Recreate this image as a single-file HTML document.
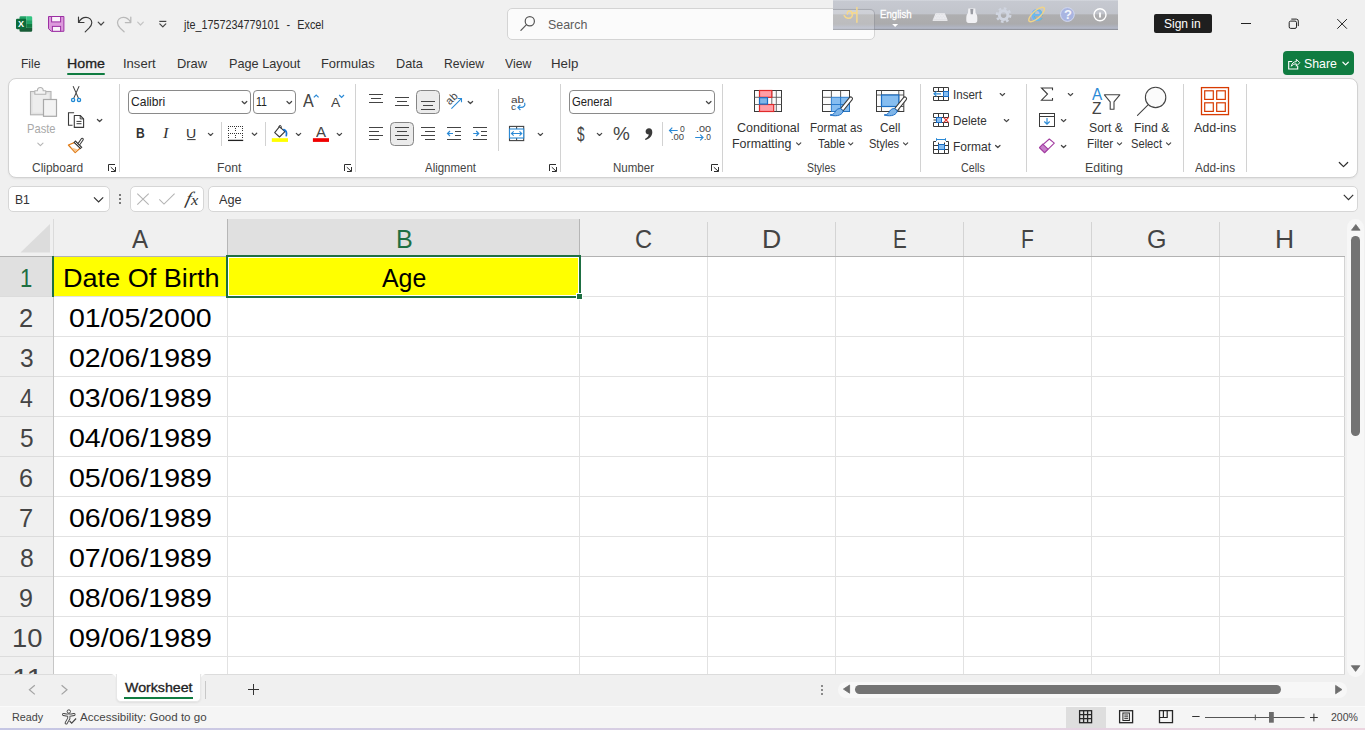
<!DOCTYPE html>
<html lang="en"><head><meta charset="utf-8"><title>jte_1757234779101 - Excel</title>
<style>
html,body{margin:0;padding:0}
body{width:1365px;height:730px;overflow:hidden;position:relative;background:#f0f0f0;font-family:"Liberation Sans",sans-serif;color:#333}
div,span.t,svg.ov{position:absolute;box-sizing:border-box}
section,header,nav,main,footer{display:block}
span.t{white-space:pre;transform-origin:0 50%}
svg.ov{left:0;top:0;width:1365px;height:730px;overflow:visible;pointer-events:none}
</style></head>
<body>
<header class="titlebar"><div class="search" style="left:507px;top:8px;width:367.5px;height:31.5px;background:#fbfbfb;border:1px solid #d4d4d4;border-radius:5px"></div><span class="t" style="left:548.44px;top:16.86px;font-size:13.4px;line-height:16px;color:#5c5c5c;transform:scaleX(0.9278);">Search</span><span class="t" style="left:183.56px;top:18.33px;font-size:12.6px;line-height:15px;color:#2b2b2b;transform:scaleX(0.8566);word-spacing:.7px;">jte_1757234779101  -  Excel</span><div class="signin" style="left:1154px;top:14px;width:58px;height:18.8px;background:#1f1f1f;border-radius:2px"></div><span class="t" style="left:1164.25px;top:15.83px;font-size:13.2px;line-height:16px;color:#fff;transform:scaleX(0.9107);">Sign in</span><svg class="ov" viewBox="0 0 1365 730"><g>
<path d="M20.800 16.200h5.600v3.900h-6.900v-2.600a1.300 1.300 0 0 1 1.300-1.300z" fill="#21a366"/>
<path d="M26.400 16.200h4.500a1.300 1.300 0 0 1 1.300 1.300v2.600h-5.800z" fill="#33c481"/>
<rect x="19.500" y="20.100" width="6.900" height="3.900" fill="#107c41"/>
<rect x="26.400" y="20.100" width="5.800" height="3.900" fill="#21a366"/>
<rect x="19.500" y="24" width="6.900" height="3.900" fill="#185c37"/>
<rect x="26.400" y="24" width="5.800" height="3.900" fill="#107c41"/>
<path d="M19.500 27.900h12.700v2.500a1.300 1.300 0 0 1 -1.300 1.300h-10.100a1.300 1.300 0 0 1 -1.300-1.300z" fill="#185c37"/>
<rect x="16" y="18.700" width="10.200" height="10.500" rx="1.100" fill="#0c6b3a"/>
<text x="18.100" y="27.200" font-family="Liberation Sans, sans-serif" font-weight="700" font-size="9.200" fill="#fff" textLength="6" lengthAdjust="spacingAndGlyphs">X</text>
</g><g>
<path d="M48.500 16.500h15.400v14.800h-12.600l-2.800-2.600z" fill="#dc9adc" stroke="#9c2fa3" stroke-width="1"/>
<rect x="51.600" y="16.500" width="9" height="5.400" fill="#fbf3fb" stroke="#9c2fa3" stroke-width="1"/>
<rect x="52.400" y="26.400" width="8.200" height="4.900" fill="#fbf3fb" stroke="#9c2fa3" stroke-width="1"/>
</g><path d="M78.5 17v5.5h5.5M78.7 22.3c1.5-3 4.3-5 7.3-5c3.3 0 5.8 2.500 5.8 5.500c0 2-1 3.600-2.800 5.400l-3.800 3.600" fill="none" stroke="#3a3a3a" stroke-width="1.15" stroke-linecap="round" stroke-linejoin="round"/><path d="M98.2 22.200000000000003 l2.8 2.8 l2.8 -2.8" fill="none" stroke="#444" stroke-width="1.2" stroke-linecap="round" stroke-linejoin="round"/><path d="M130.800 17v5.500h-5.500M130.600 22.300c-1.500-3-4.300-5-7.300-5c-3.300 0-5.800 2.500-5.800 5.500c0 2 1 3.600 2.800 5.400l3.800 3.600" fill="none" stroke="#b9b9b9" stroke-width="1.25" stroke-linecap="round" stroke-linejoin="round"/><path d="M137.7 22.200000000000003 l2.8 2.8 l2.8 -2.8" fill="none" stroke="#c4c4c4" stroke-width="1.2" stroke-linecap="round" stroke-linejoin="round"/><path d="M159.300 21.400h7" stroke="#444" stroke-width="1.2" fill="none"/><path d="M159.8 23.9 l3.0 3 l3.0 -3" fill="none" stroke="#444" stroke-width="1.2" stroke-linecap="round" stroke-linejoin="round"/><circle cx="529.800" cy="21.200" r="4.600" fill="none" stroke="#555" stroke-width="1.2"/><path d="M526.500 24.600l-5.600 5.800" stroke="#555" stroke-width="1.2" stroke-linecap="round"/><path d="M1241 23.500h10" stroke="#222" stroke-width="1"/><rect x="1289.200" y="21.100" width="7.300" height="7.300" rx="1.500" fill="none" stroke="#222" stroke-width="1"/><path d="M1291.300 19.100h5a2 2 0 0 1 2 2v5" fill="none" stroke="#222" stroke-width="1"/><path d="M1337.300 19.100l9.600 9.600M1346.900 19.100l-9.600 9.600" stroke="#222" stroke-width="1"/></svg></header><div class="imebar" style="left:833px;top:0;width:285px;height:30px;background:linear-gradient(#d4d7de 0,#c3c6ce 1.500px,#bec1c9 13.500px,#a9a9ab 15px,#a6a6a8 24px,#a9adb9 26.500px,#b0b5c5 28.400px,#858892 29px,#90939c 30px);opacity:.93"></div><div class="ime-through" style="left:833px;top:8.5px;width:41.5px;height:21px;background:rgba(255,255,255,.2);border-top:1px solid rgba(110,112,122,.4);border-right:1px solid rgba(110,112,122,.4);border-top-right-radius:5px"></div><span class="t" style="left:880.21px;top:7.93px;font-size:10.6px;line-height:13px;color:#fff;transform:scaleX(0.9099);-webkit-text-stroke:.3px #fff;">English</span><svg class="ov" viewBox="0 0 1365 730"><path d="M892.100 24h6l-3 3z" fill="#fff"/><path d="M844.200 15.500c1.200 3.200 5.800 3.800 7.600 1.200c1.500-2.200.5-5.400-2-5.600c-1.800-.1-2.900 1.300-2.400 2.900M851.300 13.400c1.600-.9 3.600-.9 5.400-.2M856.900 7.400v14.800" fill="none" stroke="#f6d98d" stroke-width="1.500" stroke-linecap="round"/><path d="M935.600 13.200h9.200l2.700 6.600h-14.700z" fill="#ececf0"/><path d="M936 14.500h8.500M935.200 16.200h10M934.400 17.900h11.600" stroke="#d2d3d9" stroke-width=".6" stroke-dasharray=".8 .8"/><path d="M932.700 20.300h14.800" stroke="#f6f6f8" stroke-width="1"/><path d="M968.300 8.500h7l.3 4.500c1.100 1.200 1.700 2.800 1.700 4.800v2.700c0 1.500-.9 2.500-2.300 2.500h-6.400c-1.400 0-2.300-1-2.300-2.500v-2.700c0-2 .6-3.600 1.700-4.800z" fill="#f1f1f4"/><path d="M970.300 9h3l-.4 5.200h-2.200z" fill="#9a9ca3"/><g fill="none" stroke="#d0d5e0"><circle cx="1003.600" cy="15.100" r="4.300" stroke-width="3"/><circle cx="1003.600" cy="15.100" r="6.700" stroke-width="2.300" stroke-dasharray="2.630 2.632"/></g><text x="1030.400" y="20.500" font-family="Liberation Sans, sans-serif" font-weight="700" font-size="22" fill="#6db7ee" textLength="12.600" lengthAdjust="spacingAndGlyphs">e</text><ellipse cx="1036.600" cy="14.500" rx="10" ry="3.700" transform="rotate(-42 1036.600 14.500)" fill="none" stroke="#f0d48a" stroke-width="1.400"/><circle cx="1067.400" cy="14.500" r="6.900" fill="#a9b5e1" stroke="#d3d9ef" stroke-width="1"/><text x="1063.900" y="19.300" font-family="Liberation Sans, sans-serif" font-weight="700" font-size="13" fill="#f3f5fb">?</text><circle cx="1100" cy="14.800" r="6" fill="none" stroke="#fff" stroke-width="1.400"/><path d="M1100 12.600v4.800" stroke="#fff" stroke-width="1.800"/></svg><nav class="tabs"><span class="t" style="left:20.72px;top:56.19px;font-size:13.6px;line-height:16px;color:#333;transform:scaleX(0.8818);">File</span><span class="t" style="left:66.53px;top:56.19px;font-size:13.6px;line-height:16px;color:#1f1f1f;transform:scaleX(1.0450);-webkit-text-stroke:.32px #1f1f1f;">Home</span><span class="t" style="left:123.30px;top:56.19px;font-size:13.6px;line-height:16px;color:#333;transform:scaleX(0.9588);">Insert</span><span class="t" style="left:176.74px;top:56.19px;font-size:13.6px;line-height:16px;color:#333;transform:scaleX(0.9461);">Draw</span><span class="t" style="left:228.66px;top:56.19px;font-size:13.6px;line-height:16px;color:#333;transform:scaleX(0.9344);">Page Layout</span><span class="t" style="left:321.44px;top:56.19px;font-size:13.6px;line-height:16px;color:#333;transform:scaleX(0.9482);">Formulas</span><span class="t" style="left:395.66px;top:56.19px;font-size:13.6px;line-height:16px;color:#333;transform:scaleX(0.9347);">Data</span><span class="t" style="left:443.90px;top:56.19px;font-size:13.6px;line-height:16px;color:#333;transform:scaleX(0.8966);">Review</span><span class="t" style="left:504.55px;top:56.19px;font-size:13.6px;line-height:16px;color:#333;transform:scaleX(0.9044);">View</span><span class="t" style="left:550.61px;top:56.19px;font-size:13.6px;line-height:16px;color:#333;transform:scaleX(0.9779);">Help</span><div class="tabline" style="left:67px;top:72.5px;width:37.5px;height:2.2px;background:#107c41;border-radius:1px"></div><div class="share" style="left:1283px;top:51px;width:70.8px;height:24px;background:#107c41;border-radius:4px"></div><span class="t" style="left:1303.84px;top:55.86px;font-size:13.4px;line-height:16px;color:#fff;transform:scaleX(0.9209);">Share</span><svg class="ov" viewBox="0 0 1365 730"><path d="M1292.200 61.500h-3.500v7.500h9v-3" fill="none" stroke="#fff" stroke-width="1.100"/><path d="M1291.300 66.300c.5-3 2.500-4.600 5-4.700v-2.400l3.500 3.500l-3.500 3.500v-2.300c-2-.1-3.700.6-5 2.400z" fill="none" stroke="#fff" stroke-width="1" stroke-linejoin="round"/><path d="M1342.8999999999999 62.25 l2.7 2.7 l2.7 -2.7" fill="none" stroke="#fff" stroke-width="1.2" stroke-linecap="round" stroke-linejoin="round"/></svg></nav><section class="ribbon"><div class="ribbon-bg" style="left:8px;top:78px;width:1349.5px;height:99.6px;background:#fff;border:1px solid #d2d2d2;border-radius:8px;box-shadow:0 1px 2px rgba(0,0,0,.06)"></div><div class="gsep" style="left:119px;top:83.5px;width:1px;height:88.5px;background:#d2d2d2"></div><div class="gsep" style="left:355px;top:83.5px;width:1px;height:88.5px;background:#d2d2d2"></div><div class="gsep" style="left:560px;top:83.5px;width:1px;height:88.5px;background:#d2d2d2"></div><div class="gsep" style="left:722px;top:83.5px;width:1px;height:88.5px;background:#d2d2d2"></div><div class="gsep" style="left:920px;top:83.5px;width:1px;height:88.5px;background:#d2d2d2"></div><div class="gsep" style="left:1026px;top:83.5px;width:1px;height:88.5px;background:#d2d2d2"></div><div class="gsep" style="left:1183px;top:83.5px;width:1px;height:88.5px;background:#d2d2d2"></div><div class="gsep" style="left:1246px;top:83.5px;width:1px;height:88.5px;background:#d2d2d2"></div><div class="sep" style="left:221px;top:122px;width:1px;height:24px;background:#d2d2d2"></div><div class="sep" style="left:265px;top:122px;width:1px;height:24px;background:#d2d2d2"></div><div class="sep" style="left:662px;top:122px;width:1px;height:24px;background:#d2d2d2"></div><div class="sep" style="left:498px;top:89px;width:1px;height:62px;background:#d2d2d2"></div><span class="t" style="left:31.89px;top:161.17px;font-size:12.2px;line-height:15px;color:#444;transform:scaleX(0.9810);">Clipboard</span><span class="t" style="left:216.60px;top:161.17px;font-size:12.2px;line-height:15px;color:#444;transform:scaleX(0.9957);">Font</span><span class="t" style="left:424.58px;top:161.17px;font-size:12.2px;line-height:15px;color:#444;transform:scaleX(0.9410);">Alignment</span><span class="t" style="left:612.75px;top:161.17px;font-size:12.2px;line-height:15px;color:#444;transform:scaleX(0.9465);">Number</span><span class="t" style="left:807.13px;top:161.17px;font-size:12.2px;line-height:15px;color:#444;transform:scaleX(0.8569);">Styles</span><span class="t" style="left:961.16px;top:161.17px;font-size:12.2px;line-height:15px;color:#444;transform:scaleX(0.8796);">Cells</span><span class="t" style="left:1085.48px;top:161.17px;font-size:12.2px;line-height:15px;color:#444;transform:scaleX(1.0147);">Editing</span><span class="t" style="left:1195.08px;top:161.17px;font-size:12.2px;line-height:15px;color:#444;transform:scaleX(0.9691);">Add-ins</span><div class="combo" style="left:128px;top:90px;width:122.5px;height:24px;background:#fff;border:1px solid #8a8a8a;border-radius:4px"></div><div class="combo" style="left:253px;top:90px;width:43px;height:24px;background:#fff;border:1px solid #8a8a8a;border-radius:4px"></div><div class="combo" style="left:569px;top:90px;width:146px;height:24px;background:#fff;border:1px solid #8a8a8a;border-radius:4px"></div><span class="t" style="left:131.29px;top:95.17px;font-size:12.2px;line-height:15px;color:#222;transform:scaleX(0.9908);">Calibri</span><span class="t" style="left:256.39px;top:95.17px;font-size:12.2px;line-height:15px;color:#222;transform:scaleX(0.8714);">11</span><span class="t" style="left:572.13px;top:95.17px;font-size:12.2px;line-height:15px;color:#222;transform:scaleX(0.9230);">General</span><div class="toggle" style="left:416px;top:90px;width:24px;height:24px;background:#ebebeb;border:1px solid #858585;border-radius:4.500px"></div><div class="toggle" style="left:390px;top:122px;width:24px;height:24px;background:#ebebeb;border:1px solid #858585;border-radius:4.500px"></div><span class="t" style="left:26.98px;top:121.67px;font-size:12.2px;line-height:15px;color:#a9a9a9;transform:scaleX(0.9146);">Paste</span><span class="t" style="left:135.99px;top:125.35px;font-size:14px;line-height:17px;color:#333;transform:scaleX(0.8652);font-weight:700;">B</span><span class="t" style="left:162.86px;top:125.31px;font-size:14.5px;line-height:17px;color:#333;transform:scaleX(1.1341);font-style:italic;font-family:'Liberation Serif', serif;">I</span><span class="t" style="left:186.31px;top:125.79px;font-size:13.6px;line-height:16px;color:#333;transform:scaleX(1.0350);">U</span><span class="t" style="left:302.87px;top:91.00px;font-size:17.6px;line-height:21px;color:#444;transform:scaleX(0.9160);">A</span><span class="t" style="left:330.67px;top:94.89px;font-size:13.6px;line-height:16px;color:#444;transform:scaleX(1.0194);">A</span><span class="t" style="left:316.07px;top:123.34px;font-size:14.6px;line-height:18px;color:#444;transform:scaleX(1.0333);">A</span><span class="t" style="left:576.65px;top:121.61px;font-size:19.6px;line-height:24px;color:#444;transform:scaleX(0.6936);">$</span><span class="t" style="left:613.32px;top:123.46px;font-size:18.6px;line-height:22px;color:#444;transform:scaleX(1.0183);">%</span><span class="t" style="left:737.06px;top:121.10px;font-size:12.4px;line-height:15px;color:#333;transform:scaleX(1.0092);">Conditional</span><span class="t" style="left:732.38px;top:137.10px;font-size:12.4px;line-height:15px;color:#333;transform:scaleX(1.0034);">Formatting</span><span class="t" style="left:809.64px;top:121.10px;font-size:12.4px;line-height:15px;color:#333;transform:scaleX(0.9389);">Format as</span><span class="t" style="left:817.94px;top:137.10px;font-size:12.4px;line-height:15px;color:#333;transform:scaleX(0.9168);">Table</span><span class="t" style="left:879.90px;top:121.10px;font-size:12.4px;line-height:15px;color:#333;transform:scaleX(0.9548);">Cell</span><span class="t" style="left:868.90px;top:137.10px;font-size:12.4px;line-height:15px;color:#333;transform:scaleX(0.8919);">Styles</span><span class="t" style="left:952.73px;top:88.10px;font-size:12.4px;line-height:15px;color:#333;transform:scaleX(0.9340);">Insert</span><span class="t" style="left:952.84px;top:114.10px;font-size:12.4px;line-height:15px;color:#333;transform:scaleX(0.9399);">Delete</span><span class="t" style="left:952.82px;top:139.70px;font-size:12.4px;line-height:15px;color:#333;transform:scaleX(0.9674);">Format</span><span class="t" style="left:1088.74px;top:121.10px;font-size:12.4px;line-height:15px;color:#333;transform:scaleX(0.9857);">Sort &amp;</span><span class="t" style="left:1086.53px;top:137.10px;font-size:12.4px;line-height:15px;color:#333;transform:scaleX(0.9497);">Filter</span><span class="t" style="left:1134.29px;top:121.10px;font-size:12.4px;line-height:15px;color:#333;transform:scaleX(0.9913);">Find &amp;</span><span class="t" style="left:1130.79px;top:137.10px;font-size:12.4px;line-height:15px;color:#333;transform:scaleX(0.8998);">Select</span><span class="t" style="left:1194.18px;top:121.10px;font-size:12.4px;line-height:15px;color:#333;transform:scaleX(1.0038);">Add-ins</span><span class="t" style="left:1091.67px;top:85.39px;font-size:15.6px;line-height:19px;color:#2b8ad6;transform:scaleX(0.9860);">A</span><span class="t" style="left:1091.81px;top:99.39px;font-size:16.2px;line-height:19px;color:#444;transform:scaleX(0.9583);">Z</span><span class="t" style="left:679.66px;top:124.48px;font-size:9.3px;line-height:11px;color:#444;transform:scaleX(0.9223);">0</span><span class="t" style="left:671.34px;top:132.48px;font-size:9.3px;line-height:11px;color:#444;transform:scaleX(1.0149);">.00</span><span class="t" style="left:695.61px;top:124.48px;font-size:9.3px;line-height:11px;color:#444;transform:scaleX(1.1684);">.00</span><span class="t" style="left:703.64px;top:132.48px;font-size:9.3px;line-height:11px;color:#444;transform:scaleX(0.9003);">.0</span><span class="t" style="left:510.69px;top:94.04px;font-size:9.4px;line-height:11px;color:#444;transform:scaleX(1.2651);">ab</span><span class="t" style="left:511.17px;top:101.04px;font-size:9.4px;line-height:11px;color:#444;transform:scaleX(1.0890);">c</span><svg class="ov" viewBox="0 0 1365 730"><path d="M108.5 171V164.500H115M110.8 167.200L115.2 171.200M115.5 167V171.500H111" fill="none" stroke="#2e2e2e" stroke-width="1"/><path d="M344.5 171V164.500H351M346.8 167.200L351.2 171.200M351.5 167V171.500H347" fill="none" stroke="#2e2e2e" stroke-width="1"/><path d="M549.5 171V164.500H556M551.8 167.200L556.2 171.200M556.5 167V171.500H552" fill="none" stroke="#2e2e2e" stroke-width="1"/><path d="M711.5 171V164.500H718M713.8 167.200L718.2 171.200M718.5 167V171.500H714" fill="none" stroke="#2e2e2e" stroke-width="1"/><rect x="30.500" y="91.500" width="20.500" height="23.300" fill="#e2e2e2" stroke="#b3b3b3" stroke-width="1.100"/><rect x="32.600" y="93.600" width="16.300" height="19.100" fill="#ededed"/><path d="M34.800 94.300v-3.600h2.600c0-2 1-3.200 2.900-3.200s2.900 1.200 2.900 3.200h2.600v3.600z" fill="#f4f4f4" stroke="#b3b3b3" stroke-width="1.100" stroke-linejoin="round"/><rect x="43.500" y="99.500" width="13" height="16.800" fill="#f3f3f3" stroke="#a9a9a9" stroke-width="1.200"/><path d="M37.8 143.1 l2.6 2.6 l2.6 -2.6" fill="none" stroke="#b5b5b5" stroke-width="1.1" stroke-linecap="round" stroke-linejoin="round"/><path d="M73.300 86.600l5 11.300M78.900 86.600l-5 11.300" stroke="#444" stroke-width="1.100" stroke-linecap="round"/><circle cx="73.100" cy="99.900" r="1.600" fill="#fff" stroke="#1e88d4" stroke-width="1.300"/><circle cx="79" cy="99.900" r="1.600" fill="#fff" stroke="#1e88d4" stroke-width="1.300"/><path d="M72.500 125.300h-4v-12.600h5.600" fill="none" stroke="#3a3a3a" stroke-width="1.100"/><path d="M74.300 115.500h5.900l3.400 3.400v8.500h-9.300z" fill="#fff" stroke="#3a3a3a" stroke-width="1.100" stroke-linejoin="round"/><path d="M80.200 115.500v3.400h3.400M76.500 121.400h5M76.500 123.700h5" fill="none" stroke="#3a3a3a" stroke-width="1"/><path d="M97.39999999999999 119.45 l2.2 2.1 l2.2 -2.1" fill="none" stroke="#444" stroke-width="1.2" stroke-linecap="round" stroke-linejoin="round"/><path d="M74.800 142.400l-6.400 2.600l6.800 7.600l5.400-4.800z" fill="#fff" stroke="#e07a14" stroke-width="1.200" stroke-linejoin="round"/><path d="M70.800 147.200l4.500 4.700l2.600-2.300z" fill="#f6c58e"/><path d="M74.400 141.400l7 6.800" stroke="#3a3a3a" stroke-width="2.900"/><path d="M75.100 142.100l5.600 5.400" stroke="#fff" stroke-width=".9"/><path d="M79.200 143.700l3-4.300" stroke="#3a3a3a" stroke-width="3.200" stroke-linecap="round"/><path d="M79.200 143.700l3-4.300" stroke="#fff" stroke-width="1.100" stroke-linecap="round"/><path d="M242.2 101.5 l2.3 2.2 l2.3 -2.2" fill="none" stroke="#444" stroke-width="1.2" stroke-linecap="round" stroke-linejoin="round"/><path d="M287.0 101.5 l2.3 2.2 l2.3 -2.2" fill="none" stroke="#444" stroke-width="1.2" stroke-linecap="round" stroke-linejoin="round"/><path d="M313.800 97.400l2.400-2.400l2.400 2.400" fill="none" stroke="#2b8ad6" stroke-width="1.200"/><path d="M339.200 95l2.400 2.400l2.400-2.400" fill="none" stroke="#2b8ad6" stroke-width="1.200"/><path d="M187.200 139.600h8.400" stroke="#333" stroke-width="1"/><path d="M208.4 133.35 l2.2 2.1 l2.2 -2.1" fill="none" stroke="#444" stroke-width="1.2" stroke-linecap="round" stroke-linejoin="round"/><path d="M228 126h1v1h-1zM228 133h1v1h-1zM230 126h1v1h-1zM230 133h1v1h-1zM232 126h1v1h-1zM232 133h1v1h-1zM234 126h1v1h-1zM234 133h1v1h-1zM236 126h1v1h-1zM236 133h1v1h-1zM238 126h1v1h-1zM238 133h1v1h-1zM240 126h1v1h-1zM240 133h1v1h-1zM242 126h1v1h-1zM242 133h1v1h-1zM228 128h1v1h-1zM228 130h1v1h-1zM228 135h1v1h-1zM228 137h1v1h-1zM235 128h1v1h-1zM235 130h1v1h-1zM235 135h1v1h-1zM235 137h1v1h-1zM242 128h1v1h-1zM242 130h1v1h-1zM242 135h1v1h-1zM242 137h1v1h-1z" fill="#333"/><path d="M228 140.400h15.200" stroke="#222" stroke-width="1.300"/><path d="M252.3 133.25 l2.2 2.1 l2.2 -2.1" fill="none" stroke="#444" stroke-width="1.2" stroke-linecap="round" stroke-linejoin="round"/><rect x="271.800" y="138.200" width="16.200" height="3.700" fill="#ffff00"/><path d="M274.700 132.700l4.800-6l5.400 5l-5.400 5.300z" fill="#fff" stroke="#3a3a3a" stroke-width="1.100" stroke-linejoin="round"/><path d="M279 127.600v-1.300c0-1.100 2.200-1.100 2.200 0v2.400" fill="none" stroke="#3a3a3a" stroke-width="1"/><path d="M283.800 129.600c2.300.8 3.200 3 2.500 6" fill="none" stroke="#1b75d0" stroke-width="1.700" stroke-linecap="round"/><path d="M296.3 133.35 l2.2 2.1 l2.2 -2.1" fill="none" stroke="#444" stroke-width="1.2" stroke-linecap="round" stroke-linejoin="round"/><rect x="312.900" y="138.200" width="16.100" height="3.700" fill="#f00000"/><path d="M337.2 133.35 l2.2 2.1 l2.2 -2.1" fill="none" stroke="#444" stroke-width="1.2" stroke-linecap="round" stroke-linejoin="round"/><path d="M369 94.5h14M371 98.5h10M369 102.5h14" stroke="#444" stroke-width="1" fill="none"/><path d="M395 97.5h14M397 101.5h10M395 105.5h14" stroke="#444" stroke-width="1" fill="none"/><path d="M421 101.5h14M423 105.5h10M421 109.5h14" stroke="#444" stroke-width="1" fill="none"/><path d="M369 127.5h14M369 131.5h10M369 135.5h14M369 139.5h10" stroke="#444" stroke-width="1" fill="none"/><path d="M395 127.5h14M397 131.5h10M395 135.5h14M397 139.5h10" stroke="#444" stroke-width="1" fill="none"/><path d="M421 127.5h14M425 131.5h10M421 135.5h14M425 139.5h10" stroke="#444" stroke-width="1" fill="none"/><path d="M447 127.5h14M455 131.5h6M455 135.5h6M447 139.5h14" stroke="#444" stroke-width="1" fill="none"/><path d="M453 133.500h-5.400M450 131l-2.500 2.500l2.500 2.500" fill="none" stroke="#2b8ad6" stroke-width="1.200"/><path d="M473 127.5h14M481 131.5h6M481 135.5h6M473 139.5h14" stroke="#444" stroke-width="1" fill="none"/><path d="M473.200 133.500h5.400M476.200 131l2.500 2.500l-2.500 2.500" fill="none" stroke="#2b8ad6" stroke-width="1.200"/><text transform="translate(449.800 105.400) rotate(-45)" font-family="Liberation Sans, sans-serif" font-size="11" fill="#444">ab</text><path d="M451.400 108.600l10-10M457.700 98.500h3.800v3.800" fill="none" stroke="#2b8ad6" stroke-width="1.100" stroke-linejoin="miter"/><path d="M468.2 101.45 l2.2 2.1 l2.2 -2.1" fill="none" stroke="#444" stroke-width="1.2" stroke-linecap="round" stroke-linejoin="round"/><path d="M524.600 102.800c1 2.600-.8 4.600-3.600 4.600h-3M520.400 104.800l-2.600 2.600l2.600 2.600" fill="none" stroke="#2b8ad6" stroke-width="1.150" stroke-linejoin="round"/><rect x="509.500" y="126.400" width="14.200" height="14.200" fill="#fff" stroke="#444" stroke-width="1.100"/><path d="M516.600 126.400v2.600M516.600 138v2.600" stroke="#444" stroke-width="1.100"/><rect x="509.500" y="129" width="14.200" height="9" fill="#fff" stroke="#2b8ad6" stroke-width="1.100"/><path d="M511.500 133.500h10.200M513.700 131.300l-2.300 2.200l2.300 2.200M519.500 131.300l2.300 2.200l-2.300 2.200" fill="none" stroke="#2b8ad6" stroke-width="1.100"/><path d="M538.1999999999999 133.35 l2.2 2.1 l2.2 -2.1" fill="none" stroke="#444" stroke-width="1.2" stroke-linecap="round" stroke-linejoin="round"/><path d="M706.4000000000001 101.5 l2.3 2.2 l2.3 -2.2" fill="none" stroke="#444" stroke-width="1.2" stroke-linecap="round" stroke-linejoin="round"/><path d="M597.3 133.35 l2.2 2.1 l2.2 -2.1" fill="none" stroke="#444" stroke-width="1.2" stroke-linecap="round" stroke-linejoin="round"/><path d="M649 128.300c2.100 0 3.300 1.600 3.300 3.900c0 3.600-2.600 6.600-6.800 7.900l-.6-1.100c2.200-1 3.700-2.600 3.900-4.400c-1.800 0-3.200-1.300-3.200-3.100s1.500-3.200 3.400-3.200z" fill="#3a3a3a"/><path d="M669.500 130.500h8.200M672.300 127.700l-2.800 2.800l2.800 2.800" fill="none" stroke="#2b8ad6" stroke-width="1.150"/><path d="M695.200 137.500h7.800M700.200 134.700l2.800 2.800l-2.800 2.800" fill="none" stroke="#2b8ad6" stroke-width="1.150"/><rect x="754.500" y="90.500" width="27" height="21" fill="#fcfcfc" stroke="#3a3a3a" stroke-width="1"/><path d="M759.500 90.500v21M771.800 90.500v21M776.300 90.500v21M754.500 97.300h27M754.500 104.500h27" stroke="#5a5a5a" stroke-width=".9" fill="none"/><rect x="759.500" y="90.500" width="12.300" height="6.800" fill="#ff9ea6" stroke="#e02b2b" stroke-width="1.200"/><rect x="759.500" y="104.500" width="14.200" height="7" fill="#ff9ea6" stroke="#e02b2b" stroke-width="1.200"/><rect x="759.500" y="97.700" width="8" height="6.400" fill="#7fb5e8" stroke="#1a6dc4" stroke-width="1.200"/><path d="M796.6 142.9 l2.1 2 l2.1 -2" fill="none" stroke="#444" stroke-width="1.15" stroke-linecap="round" stroke-linejoin="round"/><rect x="822.500" y="90.500" width="27" height="21" fill="#fcfcfc" stroke="#3a3a3a" stroke-width="1"/><rect x="831.400" y="97.300" width="18.100" height="14.200" fill="#86bdf0"/><path d="M831.400 90.500v6.800M840.600 90.500v6.800M822.500 97.300h8.900M822.500 104.500h8.900" stroke="#4a4a4a" stroke-width=".9" fill="none"/><path d="M831.400 97.300h18.100M831.400 104.500h18.100M831.400 97.300v14.200M840.600 97.300v14.200M849.500 97.300v14.200M831.400 111.500h18.100" fill="none" stroke="#1f74c8" stroke-width=".9"/><g transform="translate(0 0)"><path d="M851.800 97.300c.9.700.9 1.700.2 2.600l-8.800 10.900l-2.700-2.200l8.900-10.900c.7-.8 1.600-1 2.400-.4z" fill="#fff" stroke="#3a3a3a" stroke-width="1.050"/><path d="M840.500 108.600l2.700 2.200c-.5 3.600-5.400 6.400-13.200 4.200c3.800-.4 4.500-2 5.600-3.900c1-1.800 2.900-2.700 4.900-2.500z" fill="#7fb5e8" stroke="#1a6dc4" stroke-width="1" stroke-linejoin="round"/></g><path d="M848.6 142.9 l2.1 2 l2.1 -2" fill="none" stroke="#444" stroke-width="1.15" stroke-linecap="round" stroke-linejoin="round"/><rect x="876.500" y="90.500" width="27.300" height="21" fill="#fcfcfc" stroke="#3a3a3a" stroke-width="1"/><path d="M881.500 90.500v21M898.800 90.500v21M876.500 95h27.300M876.500 106.500h27.300" stroke="#4a4a4a" stroke-width=".9" fill="none"/><rect x="881.500" y="95" width="17.300" height="11.500" fill="#86bdf0" stroke="#1a6dc4" stroke-width="1.200"/><g transform="translate(54.1 0)"><path d="M851.800 97.300c.9.700.9 1.700.2 2.600l-8.800 10.900l-2.700-2.200l8.900-10.900c.7-.8 1.600-1 2.400-.4z" fill="#fff" stroke="#3a3a3a" stroke-width="1.050"/><path d="M840.500 108.600l2.700 2.200c-.5 3.600-5.400 6.400-13.200 4.200c3.800-.4 4.500-2 5.600-3.900c1-1.800 2.900-2.700 4.900-2.500z" fill="#7fb5e8" stroke="#1a6dc4" stroke-width="1" stroke-linejoin="round"/></g><path d="M903.5 142.9 l2.1 2 l2.1 -2" fill="none" stroke="#444" stroke-width="1.15" stroke-linecap="round" stroke-linejoin="round"/><path d="M933.500 87.500h15v4h-15zM938.500 87.500v4M943.500 87.500v4M933.500 96.500h15v4h-15zM938.500 96.500v4M943.500 96.500v4" fill="none" stroke="#3a3a3a" stroke-width="1"/><rect x="943.500" y="91.500" width="5" height="5" fill="#86bdf0" stroke="#1a6dc4" stroke-width="1"/><path d="M934 93.800h7M936.600 91.300l-2.600 2.500l2.600 2.500" fill="none" stroke="#2b8ad6" stroke-width="1.150"/><path d="M1000.1999999999999 93.55 l2.2 2.1 l2.2 -2.1" fill="none" stroke="#444" stroke-width="1.2" stroke-linecap="round" stroke-linejoin="round"/><path d="M933.500 117.500v-4h15v4M938.500 113.500v4M943.500 113.500v4M933.500 122.500v4h15v-4M938.500 122.500v4M943.500 122.500v4M933.500 117.500h3M941.500 117.500h7M933.500 122.500h3M941.500 122.500h7" stroke="#3a3a3a" stroke-width="1" fill="none"/><path d="M933.500 120h3" stroke="#3a3a3a" stroke-width="1"/><rect x="936.500" y="117.500" width="5" height="5" fill="#86bdf0" stroke="#1a6dc4" stroke-width="1"/><path d="M943.600 117.400l5 5.200M948.600 117.400l-5 5.200" stroke="#e8302a" stroke-width="1.150"/><path d="M1004.3 119.55 l2.2 2.1 l2.2 -2.1" fill="none" stroke="#444" stroke-width="1.2" stroke-linecap="round" stroke-linejoin="round"/><path d="M936 141.500h-2.500v12h15v-12h-2.500M938.500 142.500v11M944.500 142.500v11M933.500 145.500h15M933.500 149.500h15" stroke="#3a3a3a" stroke-width="1" fill="none"/><rect x="938.500" y="144.500" width="6" height="5" fill="#86bdf0" stroke="#1a6dc4" stroke-width="1"/><path d="M936.200 139.500h9.800M936.500 138.200v2.600M945.500 138.200v2.600" stroke="#2b8ad6" stroke-width="1" fill="none"/><path d="M995.5999999999999 145.45 l2.2 2.1 l2.2 -2.1" fill="none" stroke="#444" stroke-width="1.2" stroke-linecap="round" stroke-linejoin="round"/><path d="M1052.500 90.200v-2.200h-11l6 6.100l-6 6.100h11v-2.200" fill="none" stroke="#3a3a3a" stroke-width="1.100" stroke-linejoin="miter"/><path d="M1068.3 93.55 l2.2 2.1 l2.2 -2.1" fill="none" stroke="#444" stroke-width="1.2" stroke-linecap="round" stroke-linejoin="round"/><rect x="1039.500" y="113.500" width="15" height="13" fill="#fff" stroke="#3a3a3a" stroke-width="1"/><path d="M1039.500 116.500h15" stroke="#3a3a3a" stroke-width="1"/><path d="M1047 118v6M1044.300 121.500l2.700 2.700l2.700-2.700" fill="none" stroke="#2b8ad6" stroke-width="1.150"/><path d="M1061.3999999999999 119.55 l2.2 2.1 l2.2 -2.1" fill="none" stroke="#444" stroke-width="1.2" stroke-linecap="round" stroke-linejoin="round"/><path d="M1039.500 147.600l9.800-8.600l5 4.100l-9.700 9.600z" fill="#fff" stroke="#a33ea1" stroke-width="1.100" stroke-linejoin="round"/><path d="M1039.500 147.600l3.300-3.500l5.200 5.100l-3.400 3.500z" fill="#c77fca" stroke="#a33ea1" stroke-width="1.100" stroke-linejoin="round"/><path d="M1061.3999999999999 145.45 l2.2 2.1 l2.2 -2.1" fill="none" stroke="#444" stroke-width="1.2" stroke-linecap="round" stroke-linejoin="round"/><path d="M1104.400 94.800h15.400l-5.800 7v7.400h-3.800v-7.400z" fill="#fff" stroke="#444" stroke-width="1.100" stroke-linejoin="round"/><path d="M1117.4 142.9 l2.1 2 l2.1 -2" fill="none" stroke="#444" stroke-width="1.15" stroke-linecap="round" stroke-linejoin="round"/><circle cx="1155.600" cy="97.400" r="10.200" fill="#fbfbfb" stroke="#444" stroke-width="1.100"/><path d="M1148.300 104.700l-10.800 10.700" stroke="#444" stroke-width="1.100" stroke-linecap="round"/><path d="M1166.5 142.9 l2.1 2 l2.1 -2" fill="none" stroke="#444" stroke-width="1.15" stroke-linecap="round" stroke-linejoin="round"/><rect x="1201.500" y="87.600" width="27" height="27" fill="#fff" stroke="#d83b01" stroke-width="1.300"/><rect x="1204.7" y="90.8" width="8.600" height="8.600" fill="#fff" stroke="#d83b01" stroke-width="1.200"/><rect x="1204.7" y="102.8" width="8.600" height="8.600" fill="#fff" stroke="#d83b01" stroke-width="1.200"/><rect x="1216.7" y="90.8" width="8.600" height="8.600" fill="#fff" stroke="#d83b01" stroke-width="1.200"/><rect x="1216.7" y="102.8" width="8.600" height="8.600" fill="#fff" stroke="#d83b01" stroke-width="1.200"/><path d="M1339.3 162.5 l4.2 4.2 l4.2 -4.2" fill="none" stroke="#2e2e2e" stroke-width="1.2" stroke-linecap="round" stroke-linejoin="round"/></svg></section><div class="formulabar"><div class="namebox" style="left:8px;top:186px;width:102px;height:26px;background:#fff;border:1px solid #d6d6d6;border-radius:5px"></div><div class="fxbox" style="left:130px;top:186px;width:74px;height:26px;background:#fff;border:1px solid #d6d6d6;border-radius:5px"></div><div class="formula" style="left:208px;top:186px;width:1150px;height:26px;background:#fff;border:1px solid #d6d6d6;border-radius:5px"></div><span class="t" style="left:14.80px;top:192.13px;font-size:13.2px;line-height:16px;color:#333;transform:scaleX(0.9228);">B1</span><span class="t" style="left:218.98px;top:192.13px;font-size:13.2px;line-height:16px;color:#333;transform:scaleX(0.9625);">Age</span><span class="t" style="left:186.100px;top:187.500px;font-size:17.700px;line-height:21px;color:#333;font-style:italic;font-family:'Liberation Serif', serif;transform:skewX(-14deg) scaleX(1.070)">f</span><span class="t" style="left:191.10px;top:190.80px;font-size:15.4px;line-height:18px;color:#333;transform:scaleX(1.0695);font-style:italic;font-family:'Liberation Serif', serif;">x</span><svg class="ov" viewBox="0 0 1365 730"><path d="M94 197.300l4.600 4.600l4.600-4.600" fill="none" stroke="#333" stroke-width="1.200"/><path d="M119 194h2v2h-2zM119 198h2v2h-2zM119 202h2v2h-2z" fill="#7a7a7a"/><path d="M137.300 193.700l11.400 11M148.700 193.700l-11.400 11" stroke="#b4b4b4" stroke-width="1.100" fill="none"/><path d="M159.300 199.400l4.700 4.700l10.600-10.400" stroke="#b4b4b4" stroke-width="1.100" fill="none"/><path d="M1343.800 194.800l4.700 4.800l4.700-4.800" fill="none" stroke="#333" stroke-width="1.200"/></svg></div><main class="grid"><div class="sheet" style="left:0px;top:219px;width:1345px;height:455px;background:#fff"></div><div class="colhdr" style="left:0px;top:219px;width:1345px;height:37px;background:#f0f0f0"></div><div class="rowhdr" style="left:0px;top:257px;width:54px;height:417px;background:#f0f0f0"></div><div class="colhdr-sel" style="left:227px;top:219px;width:353px;height:36px;background:#e0e0e0;border-left:1px solid #b6b6b6;border-right:1px solid #b6b6b6"></div><div class="rowhdr-sel" style="left:0px;top:257px;width:51.5px;height:40px;background:#e0e0e0"></div><div class="fill" style="left:54px;top:257px;width:172px;height:39px;background:#ffff00"></div><div class="vl" style="left:227px;top:257px;width:1px;height:417px;background:#e2e2e2"></div><div class="hvl" style="left:227px;top:219px;width:1px;height:37px;background:#b6b6b6"></div><div class="vl" style="left:579px;top:257px;width:1px;height:417px;background:#e2e2e2"></div><div class="hvl" style="left:579px;top:219px;width:1px;height:37px;background:#b6b6b6"></div><div class="vl" style="left:707px;top:257px;width:1px;height:417px;background:#e2e2e2"></div><div class="hvl" style="left:707px;top:222px;width:1px;height:34px;background:#d4d4d4"></div><div class="vl" style="left:835px;top:257px;width:1px;height:417px;background:#e2e2e2"></div><div class="hvl" style="left:835px;top:222px;width:1px;height:34px;background:#d4d4d4"></div><div class="vl" style="left:963px;top:257px;width:1px;height:417px;background:#e2e2e2"></div><div class="hvl" style="left:963px;top:222px;width:1px;height:34px;background:#d4d4d4"></div><div class="vl" style="left:1091px;top:257px;width:1px;height:417px;background:#e2e2e2"></div><div class="hvl" style="left:1091px;top:222px;width:1px;height:34px;background:#d4d4d4"></div><div class="vl" style="left:1219px;top:257px;width:1px;height:417px;background:#e2e2e2"></div><div class="hvl" style="left:1219px;top:222px;width:1px;height:34px;background:#d4d4d4"></div><div class="vl" style="left:1344px;top:256px;width:1px;height:418px;background:#d4d4d4"></div><div class="hl" style="left:54px;top:296px;width:1291px;height:1px;background:#e2e2e2"></div><div class="rhl" style="left:0px;top:296px;width:53px;height:1px;background:#dcdcdc"></div><div class="hl" style="left:54px;top:336px;width:1291px;height:1px;background:#e2e2e2"></div><div class="rhl" style="left:0px;top:336px;width:53px;height:1px;background:#dcdcdc"></div><div class="hl" style="left:54px;top:376px;width:1291px;height:1px;background:#e2e2e2"></div><div class="rhl" style="left:0px;top:376px;width:53px;height:1px;background:#dcdcdc"></div><div class="hl" style="left:54px;top:416px;width:1291px;height:1px;background:#e2e2e2"></div><div class="rhl" style="left:0px;top:416px;width:53px;height:1px;background:#dcdcdc"></div><div class="hl" style="left:54px;top:456px;width:1291px;height:1px;background:#e2e2e2"></div><div class="rhl" style="left:0px;top:456px;width:53px;height:1px;background:#dcdcdc"></div><div class="hl" style="left:54px;top:496px;width:1291px;height:1px;background:#e2e2e2"></div><div class="rhl" style="left:0px;top:496px;width:53px;height:1px;background:#dcdcdc"></div><div class="hl" style="left:54px;top:536px;width:1291px;height:1px;background:#e2e2e2"></div><div class="rhl" style="left:0px;top:536px;width:53px;height:1px;background:#dcdcdc"></div><div class="hl" style="left:54px;top:576px;width:1291px;height:1px;background:#e2e2e2"></div><div class="rhl" style="left:0px;top:576px;width:53px;height:1px;background:#dcdcdc"></div><div class="hl" style="left:54px;top:616px;width:1291px;height:1px;background:#e2e2e2"></div><div class="rhl" style="left:0px;top:616px;width:53px;height:1px;background:#dcdcdc"></div><div class="hl" style="left:54px;top:656px;width:1291px;height:1px;background:#e2e2e2"></div><div class="rhl" style="left:0px;top:656px;width:53px;height:1px;background:#dcdcdc"></div><div class="rowhdr-border" style="left:53px;top:257px;width:1px;height:417px;background:#c6c6c6"></div><div class="corner-border" style="left:53px;top:219px;width:1px;height:37px;background:#dbdbdb"></div><div class="colhdr-border" style="left:0px;top:256px;width:1345px;height:1px;background:#b2b2b2"></div><svg class="ov" viewBox="0 0 1365 730"><path d="M20.500 252.500h29.500v-28.500z" fill="#dcdcdc"/></svg><span class="t" style="left:132.25px;top:224.36px;font-size:25.8px;line-height:31px;color:#444;transform:scaleX(0.9347);">A</span><span class="t" style="left:395.64px;top:224.36px;font-size:25.8px;line-height:31px;color:#1e6f43;transform:scaleX(0.9751);">B</span><span class="t" style="left:635.30px;top:224.36px;font-size:25.8px;line-height:31px;color:#444;transform:scaleX(0.9176);">C</span><span class="t" style="left:762.21px;top:224.36px;font-size:25.8px;line-height:31px;color:#444;transform:scaleX(1.0334);">D</span><span class="t" style="left:893.21px;top:224.36px;font-size:25.8px;line-height:31px;color:#444;transform:scaleX(0.8004);">E</span><span class="t" style="left:1020.62px;top:224.36px;font-size:25.8px;line-height:31px;color:#444;transform:scaleX(0.8164);">F</span><span class="t" style="left:1146.74px;top:224.36px;font-size:25.8px;line-height:31px;color:#444;transform:scaleX(0.9731);">G</span><span class="t" style="left:1275.03px;top:224.36px;font-size:25.8px;line-height:31px;color:#444;transform:scaleX(1.0263);">H</span><span class="t" style="left:20.32px;top:263.04px;font-size:25px;line-height:30px;color:#1e6f43;transform:scaleX(0.8812);">1</span><span class="t" style="left:19.32px;top:303.04px;font-size:25px;line-height:30px;color:#444;transform:scaleX(1.0183);">2</span><span class="t" style="left:19.67px;top:343.04px;font-size:25px;line-height:30px;color:#444;transform:scaleX(0.9785);">3</span><span class="t" style="left:20.07px;top:383.04px;font-size:25px;line-height:30px;color:#444;transform:scaleX(0.9206);">4</span><span class="t" style="left:19.62px;top:423.04px;font-size:25px;line-height:30px;color:#444;transform:scaleX(0.9785);">5</span><span class="t" style="left:19.32px;top:463.04px;font-size:25px;line-height:30px;color:#444;transform:scaleX(1.0054);">6</span><span class="t" style="left:19.29px;top:503.04px;font-size:25px;line-height:30px;color:#444;transform:scaleX(1.0205);">7</span><span class="t" style="left:19.53px;top:543.04px;font-size:25px;line-height:30px;color:#444;transform:scaleX(0.9886);">8</span><span class="t" style="left:19.42px;top:583.04px;font-size:25px;line-height:30px;color:#444;transform:scaleX(1.0043);">9</span><span class="t" style="left:11.71px;top:623.04px;font-size:25px;line-height:30px;color:#444;transform:scaleX(1.0950);">10</span><div class="clip" style="left:0px;top:656px;width:60px;height:18px;overflow:hidden"><span class="t" style="left:11.52px;top:7.04px;font-size:25px;line-height:30px;color:#444;transform:scaleX(1.1959);">11</span></div><div class="rowsel-line" style="left:52px;top:256px;width:2px;height:41px;background:#1e6f43"></div><div class="selection" style="left:226px;top:255px;width:355px;height:43px;border:2px solid #1e6f43;background:#ffff00;box-shadow:inset 0 0 0 1px #fff"></div><div class="fillhandle" style="left:576px;top:293px;width:7px;height:7px;background:#1e6f43;border:1px solid #fff"></div><span class="t" style="left:62.98px;top:263.19px;font-size:25.7px;line-height:31px;color:#000;transform:scaleX(1.0540);">Date Of Birth</span><span class="t" style="left:382.25px;top:263.19px;font-size:25.7px;line-height:31px;color:#000;transform:scaleX(0.9702);">Age</span><span class="t" style="left:69.49px;top:303.26px;font-size:26.1px;line-height:31px;color:#000;transform:scaleX(1.0920);">01/05/2000</span><span class="t" style="left:69.48px;top:343.26px;font-size:26.1px;line-height:31px;color:#000;transform:scaleX(1.0939);">02/06/1989</span><span class="t" style="left:69.48px;top:383.26px;font-size:26.1px;line-height:31px;color:#000;transform:scaleX(1.0939);">03/06/1989</span><span class="t" style="left:69.48px;top:423.26px;font-size:26.1px;line-height:31px;color:#000;transform:scaleX(1.0939);">04/06/1989</span><span class="t" style="left:69.48px;top:463.26px;font-size:26.1px;line-height:31px;color:#000;transform:scaleX(1.0939);">05/06/1989</span><span class="t" style="left:69.48px;top:503.26px;font-size:26.1px;line-height:31px;color:#000;transform:scaleX(1.0939);">06/06/1989</span><span class="t" style="left:69.48px;top:543.26px;font-size:26.1px;line-height:31px;color:#000;transform:scaleX(1.0939);">07/06/1989</span><span class="t" style="left:69.48px;top:583.26px;font-size:26.1px;line-height:31px;color:#000;transform:scaleX(1.0939);">08/06/1989</span><span class="t" style="left:69.48px;top:623.26px;font-size:26.1px;line-height:31px;color:#000;transform:scaleX(1.0939);">09/06/1989</span><div class="vtrack" style="left:1347px;top:218.5px;width:17px;height:458.5px;background:#f7f7f7;border-radius:8.500px"></div><div class="vthumb" style="left:1351.3px;top:235.6px;width:8.8px;height:200.6px;background:#737373;border-radius:4.400px"></div><svg class="ov" viewBox="0 0 1365 730"><path d="M1351.500 230.200h8.600l-4.300-5.700z" fill="#6e6e6e" stroke="#6e6e6e" stroke-width=".8" stroke-linejoin="round"/><path d="M1351.300 665.700h8.600l-4.300 5.700z" fill="#6e6e6e" stroke="#6e6e6e" stroke-width=".8" stroke-linejoin="round"/></svg></main><div class="sheetbar"><div class="sheetbar-line" style="left:0px;top:674px;width:1345px;height:1px;background:#dcdcdc"></div><div class="sheettab" style="left:115.8px;top:674px;width:85.4px;height:28.2px;background:#fff;border-radius:0 0 5px 5px;border:1px solid #e7e7e7;border-top:0;box-shadow:0 1px 2px rgba(0,0,0,.07)"></div><span class="t" style="left:124.74px;top:679.96px;font-size:13.4px;line-height:16px;color:#222;transform:scaleX(1.0596);-webkit-text-stroke:.32px #222;">Worksheet</span><div class="sheettab-line" style="left:124.3px;top:696.8px;width:68.7px;height:2px;background:#107c41"></div><div class="sep" style="left:205px;top:681px;width:1px;height:17.5px;background:#c8c8c8"></div><div class="htrack" style="left:838px;top:681.5px;width:508.5px;height:16.5px;background:#f7f7f7;border-radius:8.250px"></div><div class="hthumb" style="left:855px;top:685px;width:426px;height:9.2px;background:#737373;border-radius:4.600px"></div><svg class="ov" viewBox="0 0 1365 730"><path d="M115.800 674h-6c3.500 0 6 1.800 6 5zM201.200 674h6c-3.500 0-6 1.800-6 5z" fill="#fff"/><path d="M34.800 685.200l-5.400 4.600l5.400 4.600" fill="none" stroke="#a3a3a3" stroke-width="1.200"/><path d="M61.600 685.200l5.400 4.600l-5.400 4.600" fill="none" stroke="#a3a3a3" stroke-width="1.200"/><path d="M248 689.500h11M253.500 684v11" stroke="#333" stroke-width="1" fill="none"/><path d="M821 685h2v2h-2zM821 689h2v2h-2zM821 693h2v2h-2z" fill="#8a8a8a"/><path d="M849.600 685v8.200l-6.200-4.100z" fill="#6e6e6e" stroke="#6e6e6e" stroke-width=".8" stroke-linejoin="round"/><path d="M1335.600 685.400v8.400l6.400-4.200z" fill="#6e6e6e" stroke="#6e6e6e" stroke-width=".8" stroke-linejoin="round"/></svg></div><footer class="statusbar"><div class="status-bg" style="left:0px;top:706px;width:1365px;height:22px;background:#f5f5f5;border-top:1px solid #fafafa"></div><div class="deskstrip" style="left:0px;top:728px;width:1365px;height:2px;background:linear-gradient(90deg,#c5c6e4,#d9cfe3 50%,#ecd5e0)"></div><div class="view-sel" style="left:1066px;top:707px;width:40px;height:21px;background:#dedede"></div><span class="t" style="left:11.82px;top:709.91px;font-size:11.8px;line-height:14px;color:#444;transform:scaleX(0.9119);">Ready</span><span class="t" style="left:80.28px;top:709.91px;font-size:11.8px;line-height:14px;color:#444;transform:scaleX(0.9800);">Accessibility: Good to go</span><span class="t" style="left:1331.07px;top:709.91px;font-size:11.8px;line-height:14px;color:#444;transform:scaleX(0.8946);">200%</span><svg class="ov" viewBox="0 0 1365 730"><path d="M63.600 714.500c3.400 1 7 1 10.400 0M68.800 714.800v3.600l-2.600 4.600" fill="none" stroke="#444" stroke-width="3.100" stroke-linecap="round" stroke-linejoin="round"/><path d="M63.600 714.500c3.400 1 7 1 10.400 0M68.800 714.800v3.600l-2.600 4.600" fill="none" stroke="#f5f5f5" stroke-width="1.300" stroke-linecap="round" stroke-linejoin="round"/><circle cx="68.800" cy="711.500" r="1.700" fill="#f5f5f5" stroke="#444" stroke-width=".95"/><path d="M69.600 721l2.100 2.200l4.400-4.700" fill="none" stroke="#f5f5f5" stroke-width="2.600"/><path d="M69.600 721l2.100 2.200l4.400-4.700" fill="none" stroke="#444" stroke-width="1.100"/><rect x="1079.600" y="710.700" width="12" height="12" fill="none" stroke="#262626" stroke-width="1.300"/><path d="M1083.600 710.700v12M1087.600 710.700v12M1079.600 714.700h12M1079.600 718.700h12" stroke="#262626" stroke-width="1.300"/><rect x="1119.600" y="710.700" width="13" height="12" fill="none" stroke="#262626" stroke-width="1.300"/><rect x="1122.900" y="713" width="6.500" height="7.500" fill="none" stroke="#262626" stroke-width="1"/><path d="M1124.300 715h3.800M1124.300 716.800h3.800M1124.300 718.600h3.800" stroke="#262626" stroke-width=".9"/><path d="M1159.500 710.700h13v12h-13z" fill="none" stroke="#262626" stroke-width="1.300"/><path d="M1163.400 710.700v6.800M1159.500 717.500h7.700v-6.800" fill="none" stroke="#262626" stroke-width="1.200"/><path d="M1192.200 716.500h7.400" stroke="#333" stroke-width="1"/><path d="M1205 717.500h99.600" stroke="#555" stroke-width="1"/><path d="M1255.300 714.600v5.600" stroke="#555" stroke-width="1"/><rect x="1269" y="712" width="4.800" height="10.700" fill="#6b6b6b"/><path d="M1310 717.500h7.800M1313.900 713.600v7.800" stroke="#333" stroke-width="1"/></svg></footer>
</body></html>
